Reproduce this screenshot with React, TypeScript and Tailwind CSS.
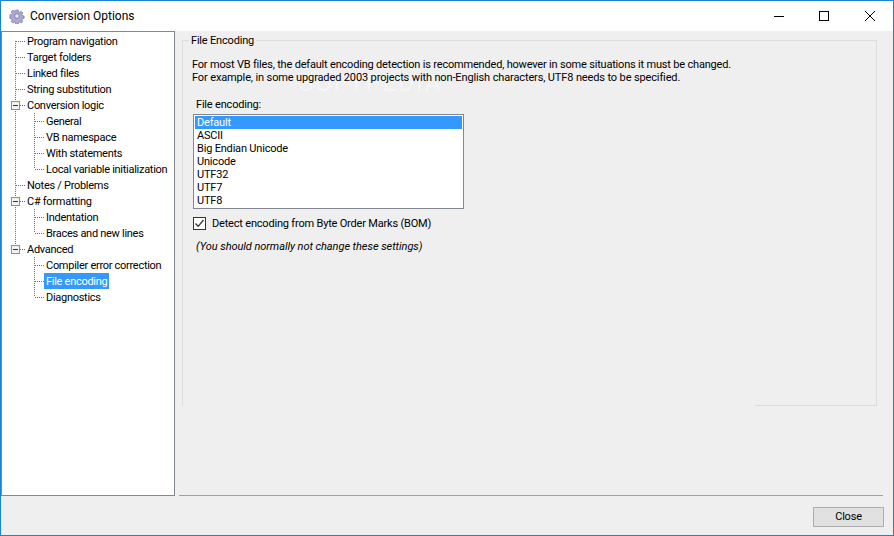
import React from 'react';

type TreeRow = {
  label: string;
  level: 0 | 1;
  expander?: boolean;
  rootLine?: boolean;
  firstRoot?: boolean;
  lastRoot?: boolean;
  lastChild?: boolean;
  selected?: boolean;
};

const treeRows: TreeRow[] = [
  { label: 'Program navigation', level: 0, firstRoot: true },
  { label: 'Target folders', level: 0 },
  { label: 'Linked files', level: 0 },
  { label: 'String substitution', level: 0 },
  { label: 'Conversion logic', level: 0, expander: true },
  { label: 'General', level: 1, rootLine: true },
  { label: 'VB namespace', level: 1, rootLine: true },
  { label: 'With statements', level: 1, rootLine: true },
  { label: 'Local variable initialization', level: 1, rootLine: true, lastChild: true },
  { label: 'Notes / Problems', level: 0 },
  { label: 'C# formatting', level: 0, expander: true },
  { label: 'Indentation', level: 1, rootLine: true },
  { label: 'Braces and new lines', level: 1, rootLine: true, lastChild: true },
  { label: 'Advanced', level: 0, expander: true, lastRoot: true },
  { label: 'Compiler error correction', level: 1 },
  { label: 'File encoding', level: 1, selected: true },
  { label: 'Diagnostics', level: 1, lastChild: true },
];

const encodings = ['Default', 'ASCII', 'Big Endian Unicode', 'Unicode', 'UTF32', 'UTF7', 'UTF8'];

const dots = { stroke: '#6e6e6e', strokeDasharray: '1 1', strokeWidth: 1, shapeRendering: 'crispEdges' as const };

function Connectors({ row }: { row: TreeRow }) {
  const root = 13.5;
  const child = 32.5;
  return (
    <svg width={row.level === 0 ? 23 : 42} height="16" className="shrink-0">
      {row.level === 0 && (
        <>
          <line x1={root} x2={root} y1={row.firstRoot ? 8 : 0} y2={row.lastRoot ? 8 : 16} {...dots} />
          <line x1={root} x2="23" y1="8.5" y2="8.5" {...dots} />
        </>
      )}
      {row.level === 1 && (
        <>
          {row.rootLine && <line x1={root} x2={root} y1="0" y2="16" {...dots} />}
          <line x1={child} x2={child} y1="0" y2={row.lastChild ? 8 : 16} {...dots} />
          <line x1={child} x2="42" y1="8.5" y2="8.5" {...dots} />
        </>
      )}
      {row.expander && (
        <>
          <rect x="9.500" y="4.500" width="8" height="8" fill="#f2f2f2" stroke="#8e8f8f" shapeRendering="crispEdges" />
          <line x1="11" x2="16" y1="8.500" y2="8.500" stroke="#333" shapeRendering="crispEdges" />
        </>
      )}
    </svg>
  );
}

export default function App() {
  return (
    <div className="flex h-[536px] w-[894px] flex-col overflow-hidden border border-[#1883d7] bg-[#efefef] font-['Roboto',sans-serif] text-[11px] leading-[13px] tracking-[-0.19px] text-black">
      {/* Title bar */}
      <div className="flex h-[30px] shrink-0 items-center bg-white">
        <svg width="16" height="16" viewBox="0 0 16 16" className="ml-[8px] mt-[-1px]">
          <path
            d="M6.600 1h2.800l.4 2 1.400.6 1.700-1.100 2 2-1.100 1.700.6 1.400 2 .4v2.800l-2 .4-.6 1.400 1.100 1.700-2 2-1.700-1.100-1.400.6-.4 2H6.600l-.4-2-1.400-.6-1.700 1.100-2-2 1.100-1.700-.6-1.400-2-.4V6.600l2-.4.6-1.400L1.100 3.100l2-2 1.700 1.100 1.400-.6z"
            transform="translate(1.200 1.200) scale(.85)"
            fill="#a9a9d4"
            stroke="#77779f"
            strokeWidth=".8"
          />
          <circle cx="8" cy="8" r="2.300" fill="#e6e6f4" stroke="#77779f" strokeWidth=".8" />
        </svg>
        <span className="ml-[5px] text-[12px] tracking-normal">Conversion Options</span>
        <div className="ml-auto flex items-center">
          <div className="h-px w-[10px] bg-black" />
          <div className="ml-[35px] size-[10px] border border-black" />
          <svg width="10" height="10" className="ml-[36px] mr-[18px]">
            <path d="M0 0 10 10M10 0 0 10" stroke="#000" strokeWidth="1" />
          </svg>
        </div>
      </div>

      <div className="flex min-h-0 flex-1">
        {/* Tree */}
        <div className="h-[465px] w-[174px] shrink-0 border border-[#828790] bg-white pt-px tracking-[-0.28px]">
          {treeRows.map((row) => (
            <div key={row.label} className="flex h-4 items-center">
              <Connectors row={row} />
              <span
                className={`inline-block h-4 whitespace-nowrap px-[2px] leading-[18px] ${row.selected ? 'bg-[#3399ff] text-white' : ''}`}
              >
                {row.label}
              </span>
            </div>
          ))}
        </div>

        {/* Right panel */}
        <div className="flex min-w-0 flex-1 flex-col">
          <div className="relative ml-[7px] mr-[16px] mt-[9px] h-[366px] border border-b-0 border-[#dcdcdc] px-[9px] pt-[17px]">
            <span className="absolute left-[6px] top-[-7px] bg-[#efefef] px-[2px]">File Encoding</span>
            {/* faint watermark behind the intro text */}
            <span className="absolute left-[116px] top-[27px] text-[24px] leading-[30px] tracking-[2px] text-white opacity-40">
              SOFTPEDIA
            </span>
            <p className="relative whitespace-nowrap">
              For most VB files, the default encoding detection is recommended, however in some situations it must be changed.
            </p>
            <p className="relative whitespace-nowrap tracking-[-0.13px]">
              For example, in some upgraded 2003 projects with non-English characters, UTF8 needs to be specified.
            </p>
            <p className="ml-[4px] mt-[14px] whitespace-nowrap">File encoding:</p>
            <div className="ml-px mt-[3px] h-[95px] w-[271px] border border-[#828790] bg-white p-px">
              {encodings.map((enc, i) => (
                <div key={enc} className={`h-[13px] pl-[2px] ${i === 0 ? 'bg-[#3399ff] text-white' : ''}`}>
                  {enc}
                </div>
              ))}
            </div>
            <label className="ml-px mt-[8px] flex items-center">
              <span className="flex size-[13px] items-center justify-center border border-[#333] bg-white">
                <svg width="11" height="11" viewBox="0 0 11 11">
                  <path d="M1.500 5.500 4.200 8.300 9.500 2" fill="none" stroke="#333" strokeWidth="1.300" />
                </svg>
              </span>
              <span className="ml-[6px] whitespace-nowrap">Detect encoding from Byte Order Marks (BOM)</span>
            </label>
            <p className="ml-[4px] mt-[10px] whitespace-nowrap italic tracking-[-0.06px]">(You should normally not change these settings)</p>
            {/* only the right end of the group's bottom edge shows in the picture */}
            <div className="absolute bottom-0 right-0 h-px w-[121px] bg-[#dcdcdc]" />
          </div>

          <div className="ml-[4px] mr-[10px] mt-[89px] h-px bg-[#a0a0a0]" />
          <div className="flex justify-end pr-[9px] pt-[11px]">
            <button className="h-[20px] w-[71px] border border-[#adadad] bg-[#e1e1e1] text-[11px] leading-4">Close</button>
          </div>
        </div>
      </div>
    </div>
  );
}
